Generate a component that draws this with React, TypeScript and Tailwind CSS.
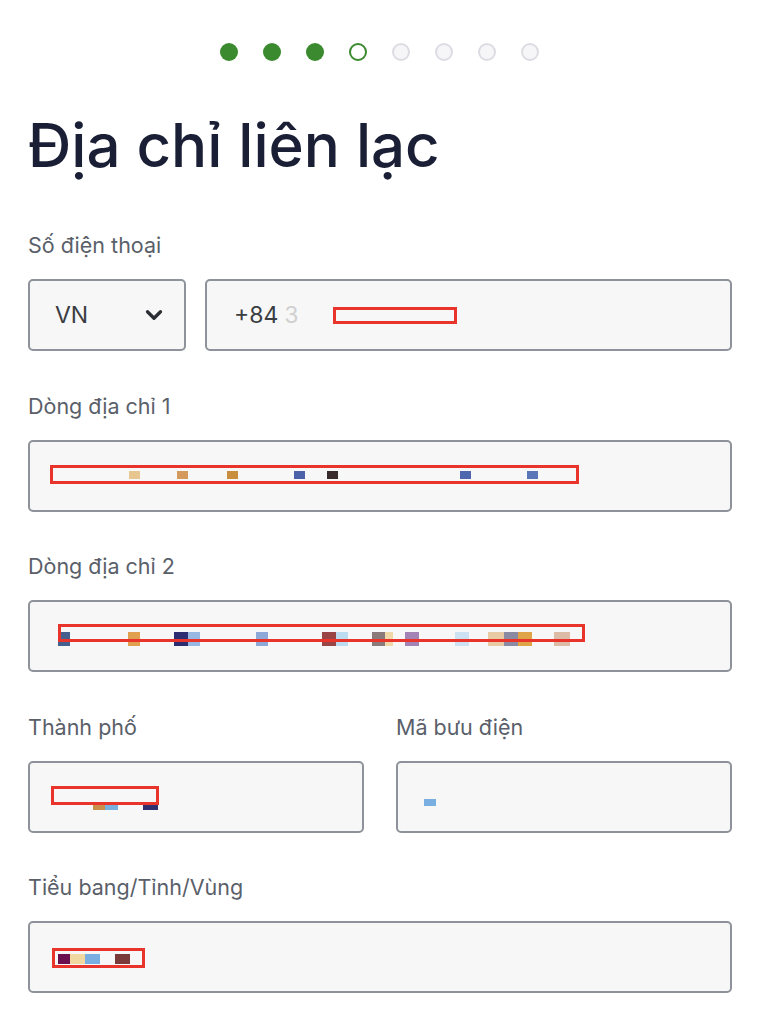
import { ChevronDown } from "lucide-react";
import type { ReactNode } from "react";

const font = { fontFamily: "Inter, 'Noto Sans', sans-serif" };

const steps = ["done", "done", "done", "current", "todo", "todo", "todo", "todo"];

type Sq = { x: number; y: number; w: number; h: number; c: string };

function Redact({
  x,
  y,
  w,
  h,
  squares = [],
}: {
  x: number;
  y: number;
  w: number;
  h: number;
  squares?: Sq[];
}) {
  return (
    <>
      {squares.map((s, i) => (
        <span
          key={i}
          className="absolute"
          style={{ left: s.x, top: s.y, width: s.w, height: s.h, background: s.c }}
        />
      ))}
      {w > 0 && (
        <span
          className="absolute border-[3px] border-[#e8342a]"
          style={{ left: x, top: y, width: w, height: h }}
        />
      )}
    </>
  );
}

function Label({ children }: { children: ReactNode }) {
  return <div className="text-[21.5px] leading-6 text-[#5a5f6a]">{children}</div>;
}

function Field({ label, children }: { label: string; children: ReactNode }) {
  return (
    <div className="flex flex-col">
      <Label>{label}</Label>
      <div className="mt-[22px] relative h-[72px] rounded-[5px] border-2 border-[#8e939b] bg-[#f7f7f8] flex items-center px-[26px] text-[23px] text-[#3a3d42]">
        {children}
      </div>
    </div>
  );
}

export default function App() {
  return (
    <div className="min-h-screen bg-white pl-[28px] pr-[32px] pt-[43px]" style={font}>
      <div className="flex justify-center gap-[25px] pr-[2px]">
        {steps.map((s, i) => (
          <span
            key={i}
            className={
              s === "done"
                ? "w-[18px] h-[18px] rounded-full bg-[#3b8a2f]"
                : s === "current"
                  ? "w-[18px] h-[18px] rounded-full border-2 border-[#3b8a2f] bg-white"
                  : "w-[18px] h-[18px] rounded-full border-2 border-[#dcdde3] bg-[#f6f6f8]"
            }
          />
        ))}
      </div>

      <h1 className="mt-[54px] text-[60px] leading-none font-medium text-[#1a1f36]">
        Địa chỉ liên lạc
      </h1>

      <div className="mt-[58px] flex flex-col gap-[42.5px]">
        <div className="flex flex-col">
          <Label>Số điện thoại</Label>
          <div className="mt-[22px] flex gap-[19px]">
            <div className="w-[158px] h-[72px] rounded-[5px] border-2 border-[#8e939b] bg-[#f7f7f8] flex items-center justify-between pl-[25px] pr-[17px] text-[23px] text-[#3a3d42]">
              <span>VN</span>
              <ChevronDown size={26} strokeWidth={3} className="text-[#2a2d33]" />
            </div>
            <div className="flex-1 relative h-[72px] rounded-[5px] border-2 border-[#8e939b] bg-[#f7f7f8] flex items-center px-[27px] text-[23px] text-[#3a3d42]">
              <span>+84</span>
              <span className="ml-[6px] text-[#d0d0d0]">3</span>
              <Redact x={126} y={26} w={124} h={17} />
            </div>
          </div>
        </div>

        <Field label="Dòng địa chỉ 1">
          <Redact
            x={20}
            y={23}
            w={529}
            h={19}
            squares={[
              { x: 99, y: 29, w: 11, h: 8, c: "#e8c690" },
              { x: 147, y: 29, w: 11, h: 8, c: "#d39a5c" },
              { x: 197, y: 29, w: 11, h: 8, c: "#c98d3e" },
              { x: 264, y: 29, w: 11, h: 8, c: "#4b62a8" },
              { x: 297, y: 29, w: 11, h: 8, c: "#3a2c2c" },
              { x: 430, y: 29, w: 11, h: 8, c: "#4f68ad" },
              { x: 497, y: 29, w: 11, h: 8, c: "#5a75b8" },
            ]}
          />
        </Field>

        <Field label="Dòng địa chỉ 2">
          <Redact
            x={28}
            y={22}
            w={527}
            h={18}
            squares={[
              { x: 28, y: 30, w: 12, h: 14, c: "#45608f" },
              { x: 98, y: 30, w: 12, h: 14, c: "#e0a050" },
              { x: 144, y: 30, w: 14, h: 14, c: "#2d2d72" },
              { x: 158, y: 30, w: 12, h: 14, c: "#98b8e4" },
              { x: 226, y: 30, w: 12, h: 14, c: "#8ea9d8" },
              { x: 292, y: 30, w: 14, h: 14, c: "#9a4545" },
              { x: 306, y: 30, w: 12, h: 14, c: "#bcdcf2" },
              { x: 342, y: 30, w: 13, h: 14, c: "#8a7a7a" },
              { x: 355, y: 30, w: 8, h: 14, c: "#f0d8a8" },
              { x: 375, y: 30, w: 14, h: 14, c: "#a383b3" },
              { x: 425, y: 30, w: 14, h: 14, c: "#cce2f2" },
              { x: 458, y: 30, w: 16, h: 14, c: "#e8caa4" },
              { x: 474, y: 30, w: 14, h: 14, c: "#8a8aa2" },
              { x: 488, y: 30, w: 14, h: 14, c: "#e0a448" },
              { x: 524, y: 30, w: 16, h: 14, c: "#dcbca6" },
            ]}
          />
        </Field>

        <div className="grid grid-cols-2 gap-[32px]">
          <Field label="Thành phố">
            <Redact
              x={21}
              y={23}
              w={108}
              h={19}
              squares={[
                { x: 63, y: 40, w: 12, h: 7, c: "#c8904a" },
                { x: 75, y: 40, w: 13, h: 7, c: "#78b0e0" },
                { x: 113, y: 40, w: 15, h: 7, c: "#303070" },
              ]}
            />
          </Field>
          <Field label="Mã bưu điện">
            <Redact x={0} y={0} w={0} h={0} squares={[{ x: 26, y: 36, w: 12, h: 7, c: "#78aee0" }]} />
          </Field>
        </div>

        <Field label="Tiểu bang/Tỉnh/Vùng">
          <Redact
            x={22}
            y={25}
            w={93}
            h={20}
            squares={[
              { x: 28, y: 31, w: 12, h: 10, c: "#6a1050" },
              { x: 40, y: 31, w: 15, h: 10, c: "#f0d8a0" },
              { x: 55, y: 31, w: 15, h: 10, c: "#78aee0" },
              { x: 85, y: 31, w: 15, h: 10, c: "#7a3a3a" },
            ]}
          />
        </Field>
      </div>
    </div>
  );
}
